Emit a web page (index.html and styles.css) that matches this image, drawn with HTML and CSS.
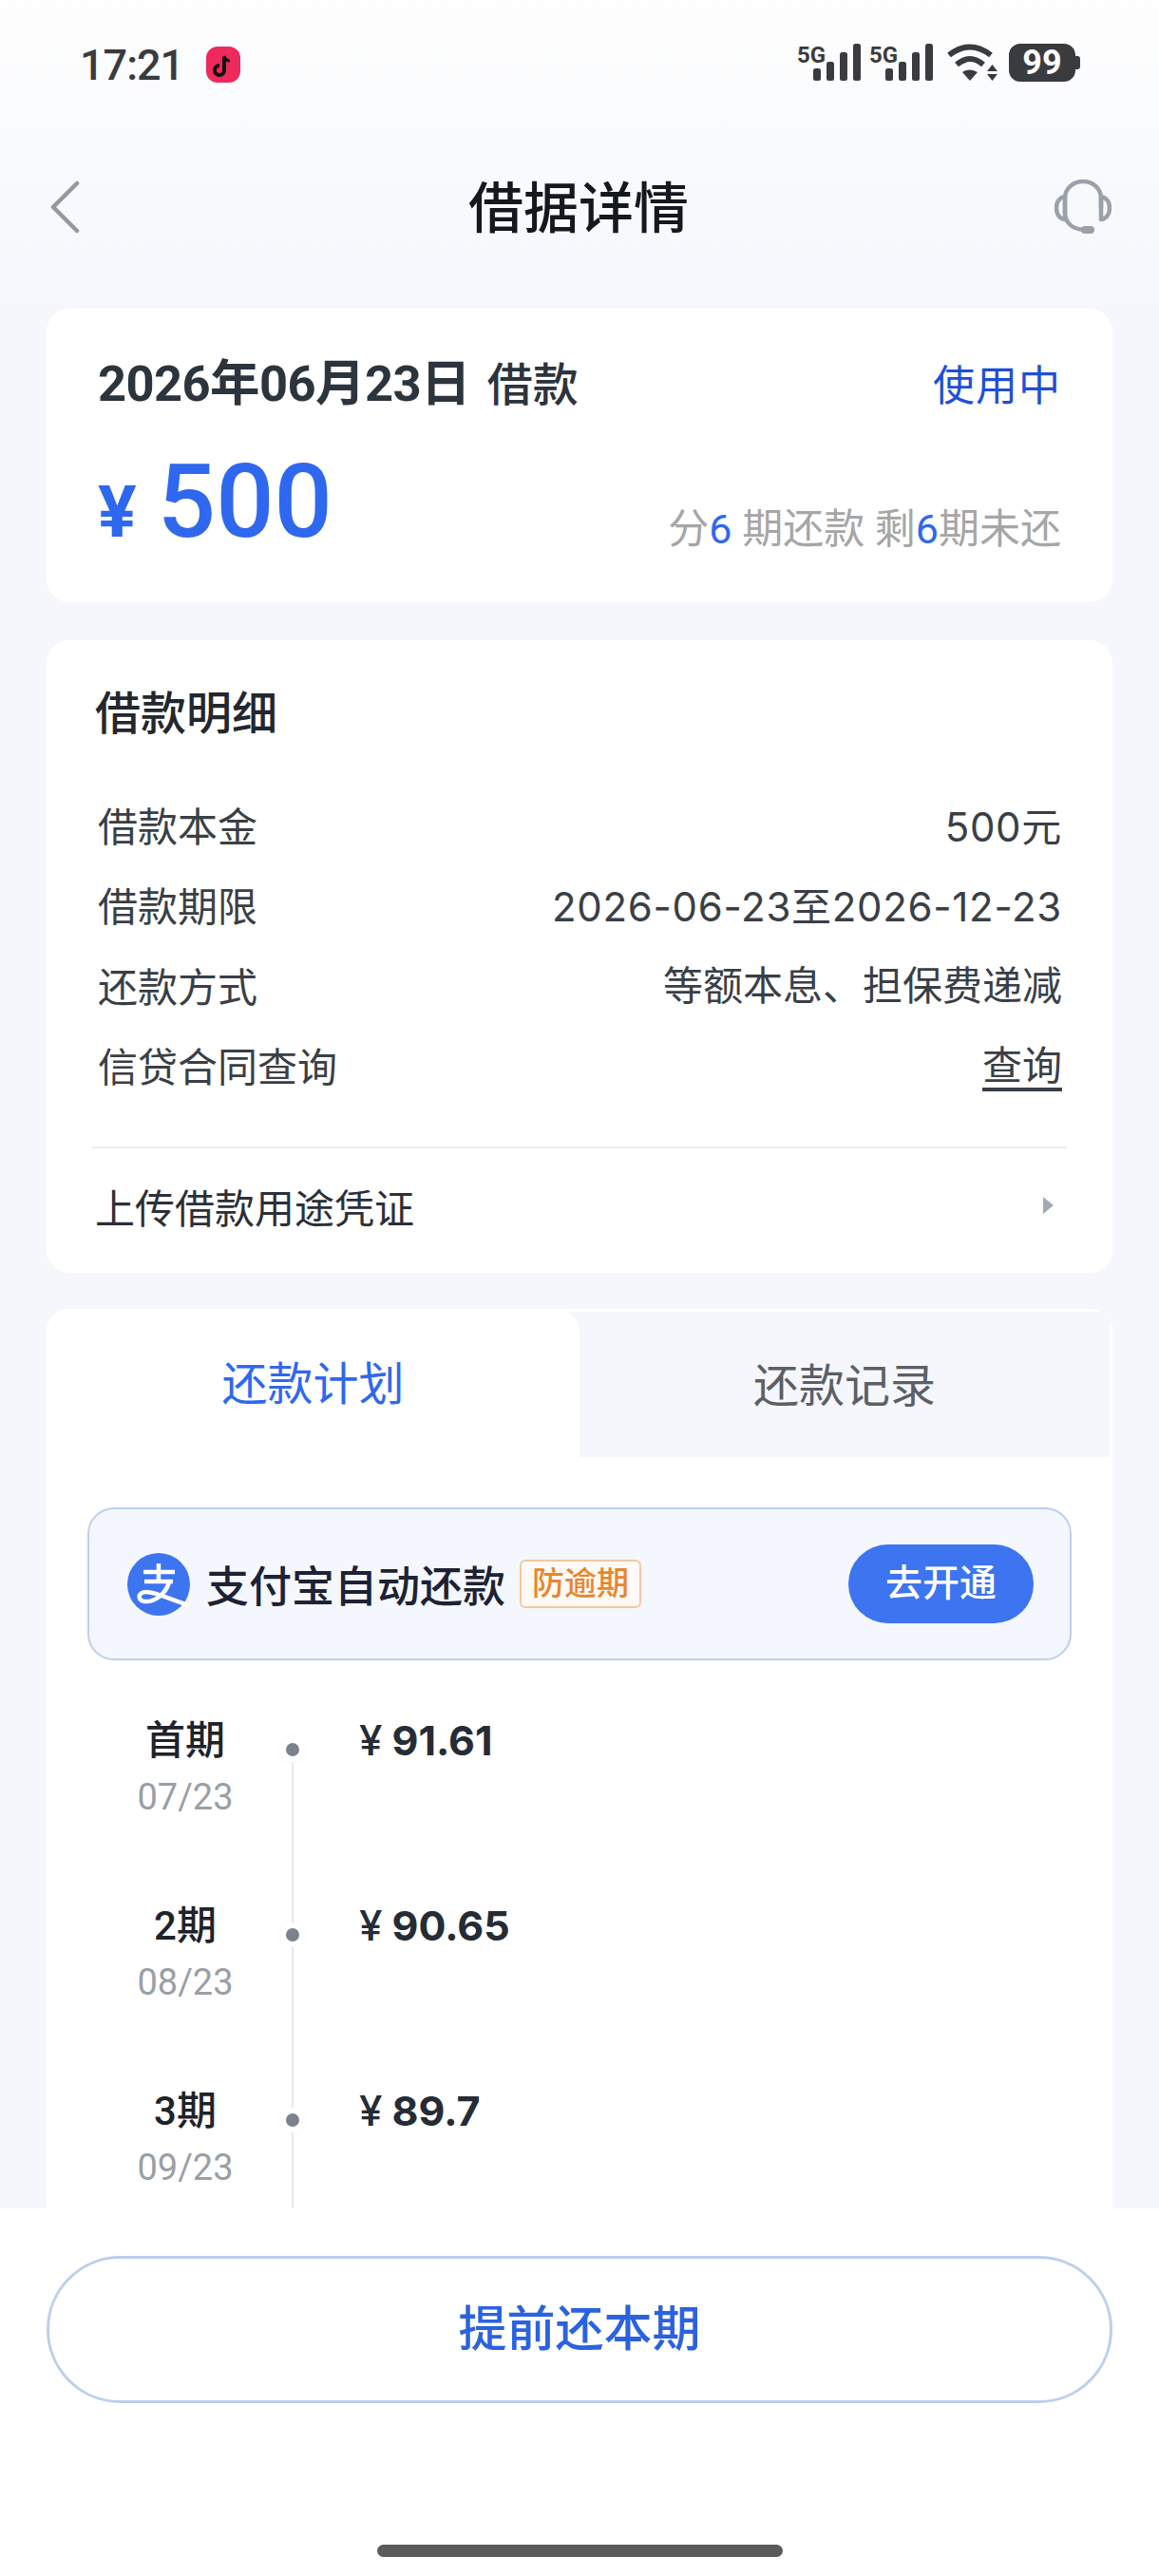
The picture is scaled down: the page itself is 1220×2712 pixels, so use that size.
FILE: index.html
```html
<!DOCTYPE html>
<html lang="zh-CN">
<head>
    <meta charset="UTF-8">
    <meta name="viewport" content="width=device-width, initial-scale=1.0">
    <title>借据详情</title>
    <link rel="stylesheet" href="styles.css">
</head>
<body>
<div class="page">

    <div class="status-bar">
        <div class="status-left">
            <span class="clock">17:21</span>
            <svg class="app-icon" width="36" height="38" viewBox="0 0 36 38">
                <rect width="36" height="38" rx="12" fill="#ee2a5c"/>
                <path d="M19 11v14a5 5 0 1 1-5-5" fill="none" stroke="#111" stroke-width="4"/>
                <path d="M19 10c1 3 3 5 6 5" fill="none" stroke="#111" stroke-width="3"/>
            </svg>
        </div>
        <div class="status-right">
            <svg class="signal" width="68" height="46" viewBox="0 0 68 46">
                <text x="0" y="21" class="signal-text">5G</text>
                <rect x="17" y="27" width="8" height="13" rx="2.5"/>
                <rect x="31" y="20" width="8" height="20" rx="2.5"/>
                <rect x="45" y="10" width="8" height="30" rx="2.5"/>
                <rect x="59" y="1" width="8" height="39" rx="2.5"/>
            </svg>
            <svg class="signal" width="68" height="46" viewBox="0 0 68 46">
                <text x="0" y="21" class="signal-text">5G</text>
                <rect x="17" y="27" width="8" height="13" rx="2.5"/>
                <rect x="31" y="20" width="8" height="20" rx="2.5"/>
                <rect x="45" y="10" width="8" height="30" rx="2.5"/>
                <rect x="59" y="1" width="8" height="39" rx="2.5"/>
            </svg>
            <svg class="wifi" width="54" height="40" viewBox="0 0 54 40">
                <path d="M3 12Q25-5 47 12" fill="none" stroke="#3a3b3f" stroke-width="6"/>
                <path d="M11 22Q25 10 39 22" fill="none" stroke="#3a3b3f" stroke-width="6"/>
                <path d="M17 30Q25 25 33 30L25 39Z" fill="#3a3b3f"/>
                <path d="M43 29L48.500 22L54 29ZM43 32H54L48.500 39Z" fill="#3a3b3f"/>
            </svg>
            <div class="battery">
                <span class="battery-body">99</span>
                <span class="battery-nub"></span>
            </div>
        </div>
    </div>

    <header class="nav-bar">
        <svg class="nav-back" width="32" height="56" viewBox="0 0 32 56">
            <path d="M29 3L4 28L29 53" fill="none" stroke="#9299a3" stroke-width="4.5" stroke-linecap="round" stroke-linejoin="round"/>
        </svg>
        <h1 class="nav-title">借据详情</h1>
        <svg class="nav-help" width="60" height="58" viewBox="0 0 60 58">
            <path d="M11 20C11 9 20 2 30 2C40 2 49 9 49 20V30M11 20V34C11 46 19 52 31 53" fill="none" stroke="#9aa1ab" stroke-width="4.5"/>
            <path d="M11 18C5 19 2 24 2 30C2 36 5 41 11 42Z" fill="none" stroke="#9aa1ab" stroke-width="4.5" stroke-linejoin="round"/>
            <path d="M49 18C55 19 58 24 58 30C58 36 55 41 49 42Z" fill="none" stroke="#9aa1ab" stroke-width="4.5" stroke-linejoin="round"/>
            <rect x="28" y="49" width="14" height="8" rx="4" fill="#9aa1ab"/>
        </svg>
    </header>

    <main class="content">

        <section class="card summary">
            <div class="summary-top">
                <div class="summary-date"><b>2026年06月23日</b> <span>借款</span></div>
                <div class="summary-state">使用中</div>
            </div>
            <div class="summary-bottom">
                <div class="summary-money"><span class="yen">¥</span><span class="money-num">500</span></div>
                <div class="summary-note">分<em>6</em> 期还款 剩<em>6</em>期未还</div>
            </div>
        </section>

        <section class="card detail">
            <h2 class="detail-title">借款明细</h2>
            <div class="detail-row"><span>借款本金</span><span class="detail-num">500元</span></div>
            <div class="detail-row"><span>借款期限</span><span class="detail-num">2026-06-23至2026-12-23</span></div>
            <div class="detail-row"><span>还款方式</span><span class="detail-value">等额本息、担保费递减</span></div>
            <div class="detail-row"><span>信贷合同查询</span><span class="detail-value detail-link">查询</span></div>
            <div class="detail-line"></div>
            <div class="upload-row">
                <span>上传借款用途凭证</span>
                <span class="upload-arrow"></span>
            </div>
        </section>

        <section class="card plan">
            <div class="tabs">
                <div class="tab tab-active">还款计划</div>
                <div class="tab tab-other">还款记录</div>
            </div>

            <div class="alipay">
                <svg class="alipay-logo" width="66" height="66" viewBox="0 0 66 66">
                    <circle cx="33" cy="33" r="33" fill="#3d74f0"/>
                    <g fill="none" stroke="#fff" stroke-width="4.5">
                        <path d="M33 11V30M17 20H50M18 30H48"/>
                        <path d="M44 31C40 44 28 52 18 51C10 50 11 41 20 41C30 41 48 50 65 55"/>
                    </g>
                </svg>
                <span class="alipay-text">支付宝自动还款</span>
                <span class="alipay-tag">防逾期</span>
                <span class="alipay-btn">去开通</span>
            </div>

            <div class="timeline">
                <div class="term">
                    <div class="term-when"><div class="term-name">首期</div><div class="term-date">07/23</div></div>
                    <div class="term-rail"></div>
                    <div class="term-amount"><span class="term-yen">¥</span>91.61</div>
                </div>
                <div class="term">
                    <div class="term-when"><div class="term-name">2期</div><div class="term-date">08/23</div></div>
                    <div class="term-rail"></div>
                    <div class="term-amount"><span class="term-yen">¥</span>90.65</div>
                </div>
                <div class="term">
                    <div class="term-when"><div class="term-name">3期</div><div class="term-date">09/23</div></div>
                    <div class="term-rail"></div>
                    <div class="term-amount"><span class="term-yen">¥</span>89.7</div>
                </div>
            </div>
        </section>

    </main>

    <footer class="footer">
        <div class="repay-btn">提前还本期</div>
        <div class="home-bar"></div>
    </footer>

</div>
</body>
</html>
```

FILE: styles.css
```css
* {
    box-sizing: border-box;
}

body {
    margin: 0;
    font-family: Roboto, "Noto Sans CJK SC", sans-serif;
    color: #23272e;
}

.page {
    width: 1220px;
    height: 2712px;
    display: flex;
    flex-direction: column;
    overflow: hidden;
    background: linear-gradient(#fefefe 0, #f5f7fc 320px);
}

/* status bar */
.status-bar {
    height: 136px;
    padding: 0 80px 0 84px;
    display: flex;
    justify-content: space-between;
    align-items: center;
    color: #3a3b3f;
}

.status-left {
    display: flex;
    align-items: center;
    gap: 24px;
}

.clock {
    font-size: 45px;
    font-weight: 500;
    letter-spacing: -1px;
}

.status-right {
    display: flex;
    align-items: center;
}

.signal {
    fill: #3a3b3f;
    margin-right: 8px;
}

.signal-text {
    font-size: 24px;
    font-weight: 700;
}

.wifi {
    margin: 0 12px 4px 5px;
}

.battery {
    display: flex;
    align-items: center;
    margin-bottom: 4px;
    margin-right: 3px;
}

.battery-body {
    width: 70px;
    height: 40px;
    border-radius: 12px;
    background: #3a3b3f;
    color: #fff;
    font-size: 36px;
    font-weight: 700;
    line-height: 40px;
    text-align: center;
}

.battery-nub {
    width: 5px;
    height: 14px;
    border-radius: 0 3px 3px 0;
    background: #3a3b3f;
}

/* nav */
.nav-bar {
    height: 164px;
    padding: 0 50px 0 52px;
    display: flex;
    justify-content: space-between;
    align-items: center;
}

.nav-back {
    margin-right: 24px;
}

.nav-title {
    margin: 0 0 6px;
    font-size: 58px;
    font-weight: 500;
    color: #14181f;
}

.content {
    flex: 1;
    min-height: 0;
    overflow: hidden;
    padding: 25px 49px 0;
}

.card {
    background: #fff;
    border-radius: 24px;
}

/* summary card */
.summary {
    height: 309px;
    padding: 44px 54px 0;
}

.summary-top {
    display: flex;
    justify-content: space-between;
    align-items: center;
    height: 60px;
}

.summary-date {
    font-size: 48px;
    color: #2c343d;
    white-space: nowrap;
}

.summary-date b {
    font-size: 52.5px;
    letter-spacing: -0.6px;
}

.summary-date span {
    margin-left: 6px;
    font-weight: 500;
}

.summary-state {
    font-size: 44px;
    letter-spacing: 1px;
    color: #1f4fd8;
    margin-top: 8px;
}

.summary-bottom {
    margin-top: 50px;
    height: 120px;
    display: flex;
    justify-content: space-between;
    align-items: flex-end;
}

.summary-money {
    display: flex;
    align-items: baseline;
    color: #2f68ee;
    line-height: 120px;
}

.yen {
    font-size: 76px;
    font-weight: 700;
    margin-right: 22px;
}

.money-num {
    font-size: 108px;
    font-weight: 500;
}

.summary-note {
    margin-bottom: 17px;
    font-size: 43px;
    line-height: 50px;
    color: #a6a6a6;
}

.summary-note em {
    font-style: normal;
    color: #2f68ee;
}

/* detail card */
.detail {
    height: 666px;
    margin-top: 40px;
    padding-top: 48px;
}

.detail-title {
    margin: 0 0 43px;
    padding-left: 51px;
    font-size: 48px;
    font-weight: 500;
    line-height: 60px;
    color: #23272e;
}

.detail-row {
    height: 84.5px;
    padding: 0 53px 0 54px;
    display: flex;
    justify-content: space-between;
    align-items: center;
    font-size: 42px;
    color: #3a3f46;
}

.detail-num {
    font-family: Inter, "Noto Sans CJK SC", sans-serif;
    letter-spacing: 0.7px;
}

.detail-value {
    margin-bottom: 4px;
}

.detail-link {
    text-decoration: underline;
    text-underline-offset: 8px;
}

.detail-line {
    height: 2px;
    margin: 44px 48px 0;
    background: #ececee;
}

.upload-row {
    height: 120px;
    padding: 0 62px 0 51px;
    display: flex;
    justify-content: space-between;
    align-items: center;
    font-size: 42px;
    color: #2c3038;
}

.upload-arrow {
    width: 0;
    height: 0;
    border-left: 11px solid #a4aab3;
    border-top: 9px solid transparent;
    border-bottom: 9px solid transparent;
}

/* repayment plan card */
.plan {
    margin-top: 38px;
    overflow: hidden;
    padding-bottom: 20px;
}

.tabs {
    display: grid;
    grid-template-columns: 561px 558px;
    height: 156px;
}

.tab {
    display: flex;
    align-items: center;
    justify-content: center;
    padding-bottom: 6px;
    font-size: 48px;
    color: #5b6066;
}

.tab-active {
    position: relative;
    background: #fff;
    color: #2f68ee;
    border-top-right-radius: 24px;
}

.tab-other {
    margin: 3px 0 0 -24px;
    padding-left: 24px;
    background: #f5f7fc;
}

.alipay {
    height: 161px;
    margin: 53px 43px 0;
    padding: 0 38px 0 40px;
    display: flex;
    align-items: center;
    background: #f4f7fe;
    border: 2px solid #bdd0ea;
    border-radius: 28px;
}

.alipay-text {
    margin-left: 17px;
    font-size: 45px;
    font-weight: 500;
    color: #1e2233;
}

.alipay-tag {
    margin-left: 15px;
    padding: 0 11px;
    height: 51px;
    line-height: 47px;
    font-size: 34px;
    font-weight: 500;
    color: #e8862e;
    background: #fffaf5;
    border: 2px solid #f0c9a4;
    border-radius: 6px;
}

.alipay-btn {
    margin-left: auto;
    width: 195px;
    height: 83px;
    line-height: 83px;
    text-align: center;
    font-size: 39px;
    font-weight: 500;
    color: #fff;
    background: #3d74f0;
    border-radius: 42px;
}

.timeline {
    margin-top: 55px;
    padding-left: 43px;
}

.term {
    height: 195px;
    display: grid;
    grid-template-columns: 206px 20px auto;
    justify-content: start;
}

.term-when {
    text-align: center;
}

.term-name {
    height: 60px;
    line-height: 60px;
    font-size: 42px;
    font-weight: 500;
    color: #1f2329;
}

.term-date {
    margin-top: -1px;
    line-height: 60px;
    font-size: 38px;
    color: #999fa6;
}

.term-rail {
    position: relative;
}

.term-rail::before {
    content: "";
    position: absolute;
    left: 9px;
    top: 39px;
    bottom: -39px;
    width: 2px;
    background: #e8eaee;
}

.term-rail::after {
    content: "";
    position: absolute;
    left: 3px;
    top: 32px;
    width: 14px;
    height: 14px;
    border-radius: 50%;
    background: #7b828d;
    box-shadow: 0 0 0 6px #fff, 0 0 8px 6px rgba(0, 0, 0, 0.03);
}

.term-amount {
    margin-left: 60px;
    line-height: 58px;
    font-family: Inter, "Noto Sans CJK SC", sans-serif;
    font-size: 43px;
    font-weight: 700;
    color: #262c35;
}

.term-yen {
    font-size: 44px;
    font-weight: 500;
    margin-right: 10px;
}

/* footer */
.footer {
    height: 387px;
    padding: 50px 49px 0;
    display: flex;
    flex-direction: column;
    align-items: center;
    background: #fff;
}

.repay-btn {
    width: 100%;
    height: 155px;
    line-height: 149px;
    text-align: center;
    font-size: 51px;
    font-weight: 500;
    color: #2b62e0;
    border: 3px solid #bccfec;
    border-radius: 78px;
}

.home-bar {
    width: 427px;
    height: 13px;
    margin-top: 149px;
    border-radius: 7px;
    background: #5a5a5a;
}
```
